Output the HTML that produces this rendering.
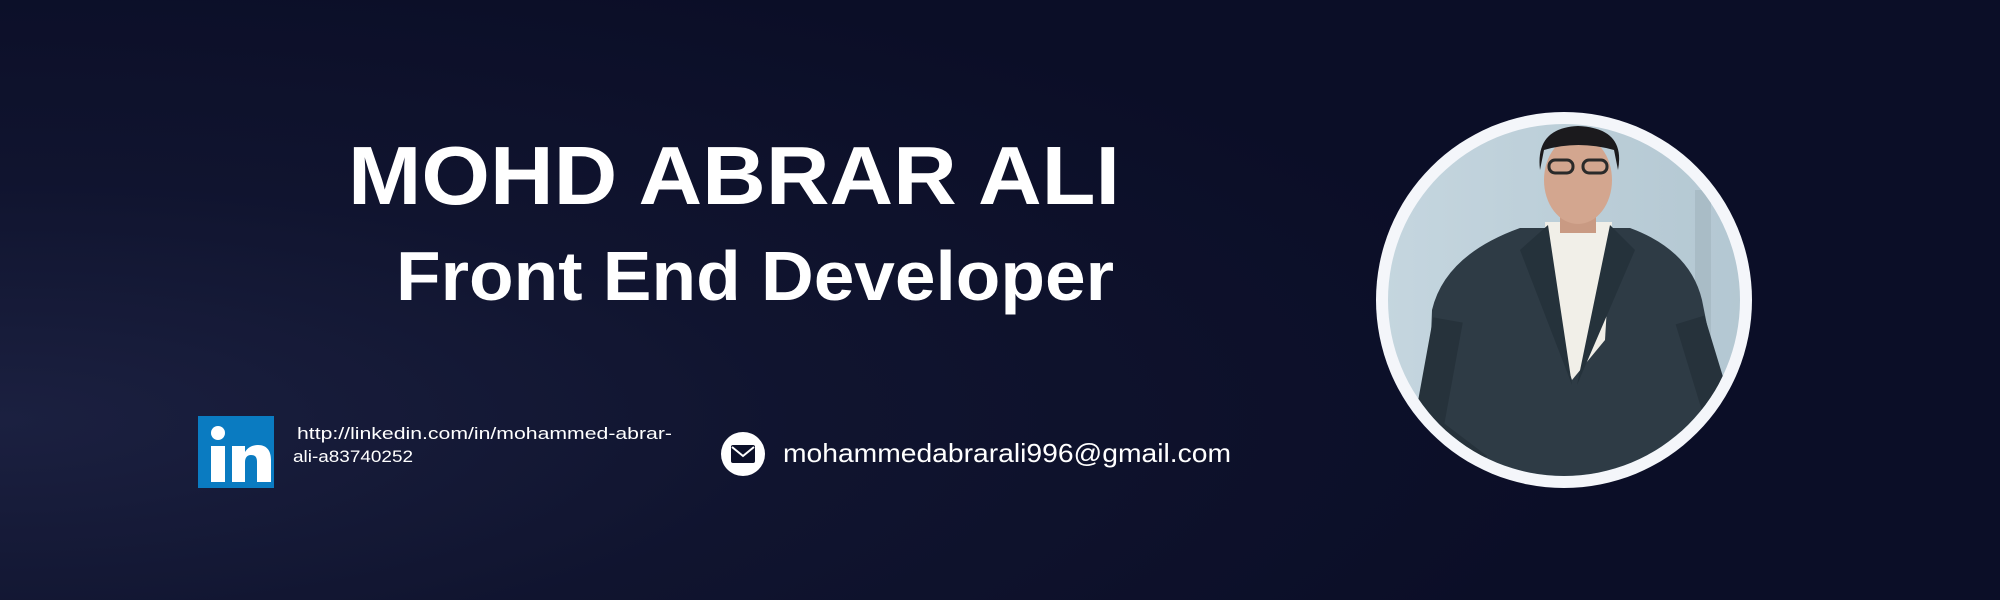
<!DOCTYPE html>
<html><head><meta charset="utf-8"><style>
html,body{margin:0;padding:0;width:2000px;height:600px;overflow:hidden;background:#0c1029}
svg{display:block}
text{font-family:"Liberation Sans",sans-serif;fill:#fff}
</style></head><body>
<svg width="2000" height="600" viewBox="0 0 2000 600" xmlns="http://www.w3.org/2000/svg">
<defs>
<radialGradient id="bg" cx="0" cy="0.7" r="0.8">
<stop offset="0" stop-color="#1b2040"/>
<stop offset="0.5" stop-color="#10142f"/>
<stop offset="1" stop-color="#0b0e27"/>
</radialGradient>
<linearGradient id="wall" x1="0" y1="0" x2="1" y2="0">
<stop offset="0" stop-color="#c5d6df"/><stop offset="1" stop-color="#b3c7d2"/>
</linearGradient>
<clipPath id="cc"><circle cx="1564" cy="300" r="176"/></clipPath>
</defs>
<rect width="2000" height="600" fill="url(#bg)"/>
<text x="348" y="204" font-size="83" font-weight="bold" textLength="772" lengthAdjust="spacingAndGlyphs">MOHD ABRAR ALI</text>
<text x="396" y="300" font-size="70" font-weight="bold" textLength="718" lengthAdjust="spacingAndGlyphs">Front End Developer</text>
<rect x="198" y="416" width="76" height="72" fill="#0a7bc1"/>
<circle cx="218" cy="433" r="7" fill="#fff"/>
<rect x="211" y="446" width="14" height="36" fill="#fff"/>
<path d="M232 446h13v6c3-5 8-7 13-7 9 0 13 6 13 15v22h-14v-20c0-5-2-7-6-7s-6 3-6 7v20h-13z" fill="#fff"/>
<text x="297" y="439" font-size="17" textLength="375" lengthAdjust="spacingAndGlyphs">http://linkedin.com/in/mohammed-abrar-</text>
<text x="293" y="462" font-size="17" textLength="120" lengthAdjust="spacingAndGlyphs">ali-a83740252</text>
<circle cx="743" cy="454" r="22" fill="#fff"/>
<rect x="731" y="445" width="24" height="18" rx="2" fill="#0c1029"/>
<path d="M732 447l11 9 11-9" stroke="#fff" stroke-width="2" fill="none"/>
<text x="783" y="462" font-size="26" textLength="448" lengthAdjust="spacingAndGlyphs">mohammedabrarali996@gmail.com</text>
<circle cx="1564" cy="300" r="188" fill="#f4f6fa"/>
<g clip-path="url(#cc)">
<rect x="1380" y="110" width="370" height="380" fill="url(#wall)"/>
<rect x="1695" y="190" width="16" height="190" fill="#a9bcc6"/>
<path d="M1425 500 L1432 310 Q1445 255 1520 228 L1630 228 Q1690 250 1702 300 L1728 430 L1705 470 L1700 500 Z" fill="#2e3b45"/>
<path d="M1545 222 L1612 222 L1605 340 L1572 380 L1548 310 Z" fill="#f1efe8"/>
<path d="M1548 225 L1520 250 L1572 385 Z M1610 225 L1635 250 L1577 385 Z" fill="#25323b"/>
<rect x="1560" y="205" width="36" height="28" fill="#c99a83"/>
<ellipse cx="1578" cy="180" rx="34" ry="44" fill="#d3a68f"/>
<path d="M1540 170 Q1535 128 1578 126 Q1626 128 1618 170 L1614 150 Q1578 140 1544 150 Z" fill="#1b1a1d"/>
<rect x="1549" y="160" width="24" height="13" rx="6" fill="none" stroke="#2a2a2a" stroke-width="3"/>
<rect x="1583" y="160" width="24" height="13" rx="6" fill="none" stroke="#2a2a2a" stroke-width="3"/>
<path d="M1448 320 L1428 430 L1478 468" stroke="#26323b" stroke-width="30" fill="none"/>
<path d="M1690 320 L1722 425 L1672 462" stroke="#26323b" stroke-width="30" fill="none"/>
</g>
</svg>
</body></html>
